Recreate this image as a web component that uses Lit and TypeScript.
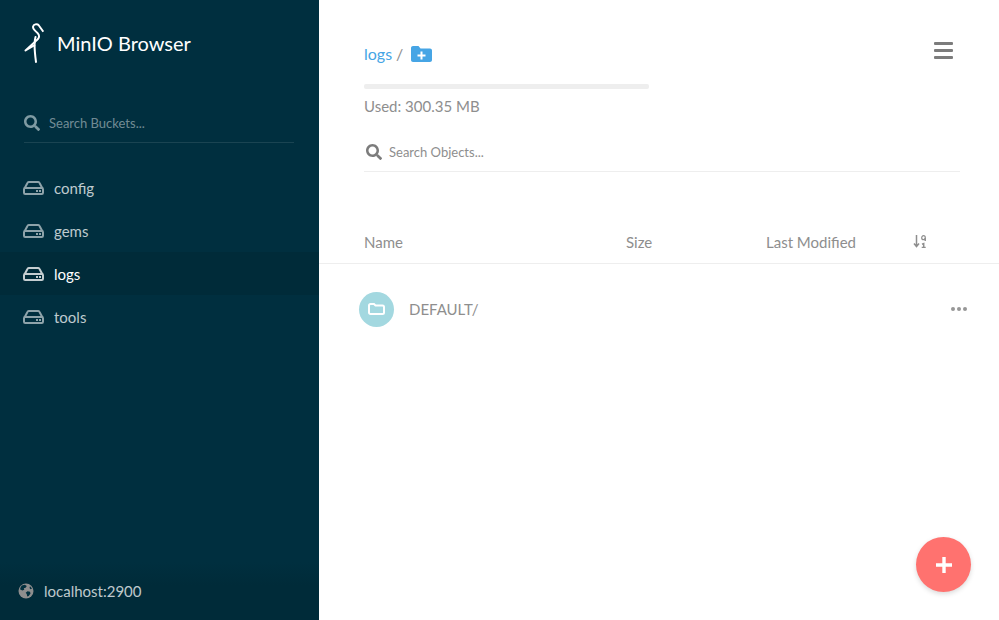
import { LitElement, css, html } from 'lit'
import { customElement } from 'lit/decorators.js'

const searchIcon = html`<svg viewBox="0 0 512 512" width="16" height="16"><path fill="currentColor" d="M505 442.700L405.300 343c-4.500-4.500-10.600-7-17-7H372c27.600-35.300 44-79.700 44-128C416 93.100 322.900 0 208 0S0 93.100 0 208s93.100 208 208 208c48.300 0 92.700-16.400 128-44v16.300c0 6.400 2.500 12.500 7 17l99.700 99.700c9.400 9.400 24.600 9.400 33.900 0l28.300-28.300c9.400-9.400 9.400-24.600.1-34zM208 336c-70.700 0-128-57.200-128-128 0-70.700 57.200-128 128-128 70.700 0 128 57.200 128 128 0 70.700-57.200 128-128 128z"/></svg>`

const driveIcon = html`<svg class="drive" viewBox="0 0 21 14" width="21" height="14">
  <path fill="none" stroke="currentColor" stroke-width="2" d="M1.500 7.500 4.300 2.200C4.600 1.500 5 1 5.700 1h9.600c.7 0 1.100.5 1.400 1.200L19.500 7.500"/>
  <rect x="1" y="7" width="19" height="6" rx="1.200" fill="none" stroke="currentColor" stroke-width="2"/>
  <rect x="13" y="9" width="2" height="2" fill="currentColor"/><rect x="16" y="9" width="2" height="2" fill="currentColor"/>
</svg>`

const buckets = ['config', 'gems', 'logs', 'tools']

@customElement('app-root')
export default class AppRoot extends LitElement {
  render() {
    return html`
    <aside class="sidebar">
      <div class="brand">
        <svg class="logo" viewBox="0 0 20 40" width="20" height="40">
          <path fill="none" stroke="#fff" stroke-width="1.900" stroke-linejoin="round" d="M19.300 8.700 14.500 2C13 .5 9.500 1.500 9 3.700 8.700 6 11 7.500 13.500 10 15.500 12 15.500 14 14 16L1.500 27.500 11 22"/>
          <path fill="none" stroke="#fff" stroke-width="2" stroke-linecap="round" d="M11.500 14C9.500 20 10.500 28 12 39"/>
        </svg>
        <span class="brand-name">MinIO Browser</span>
      </div>
      <div class="bucket-search">
        <span class="search-icon">${searchIcon}</span>
        <span>Search Buckets...</span>
      </div>
      <ul class="buckets">
        ${buckets.map(name => html`
          <li class=${name === 'logs' ? 'active' : ''}>${driveIcon}<span>${name}</span></li>
        `)}
      </ul>
      <div class="host">
        <svg viewBox="0 0 16 16" width="16" height="16">
          <circle cx="8" cy="8" r="7.500" fill="#8e8e8e"/>
          <path fill="#002f3e" d="M3.800 2.600 6.800 1.800 8.800 2.900 7.600 4.700 5.800 5.200 6.300 6.800 4.300 7.600 2 6.300C2.300 4.900 3 3.600 3.800 2.600ZM9.500 8.200 12 8.800 12.500 10.500 10.700 13 9.300 13.600 8.700 11 7.700 9.700ZM12 3.300 14 5.500 12.600 6.200 11.500 5Z"/>
        </svg>
        <span>localhost:2900</span>
      </div>
    </aside>
    <main class="content">
      <div class="top">
        <div class="path-row">
          <span class="crumb">logs</span><span class="slash">/</span>
          <svg class="new-folder" viewBox="0 0 21 16" width="21" height="16">
            <path fill="#46a5e5" d="M0 2C0 .9.900 0 2 0h5.500l2 2.500H19c1.100 0 2 .9 2 2V14c0 1.100-.9 2-2 2H2c-1.100 0-2-.9-2-2Z"/>
            <path stroke="#fff" stroke-width="2" d="M6.500 9.500h8M10.500 5.500v8"/>
          </svg>
          <span class="menu"><i></i><i></i><i></i></span>
        </div>
        <div class="usage"></div>
        <div class="used">Used: 300.35 MB</div>
        <div class="object-search">
          <span class="search-icon">${searchIcon}</span>
          <span>Search Objects...</span>
        </div>
      </div>
      <div class="list-head">
        <span class="col-name">Name</span>
        <span class="col-size">Size</span>
        <span class="col-modified">Last Modified</span>
        <svg viewBox="0 0 14 13" width="14" height="13">
          <path fill="none" stroke="#8e8e8e" stroke-width="1.500" d="M3.500 0v11M1 8.500l2.500 3 2.500-3"/>
          <ellipse cx="10.500" cy="2.700" rx="1.800" ry="2" fill="none" stroke="#8e8e8e" stroke-width="1.200"/>
          <path fill="none" stroke="#8e8e8e" stroke-width="1.500" d="M12.200 3v3M9 9.200 10.700 8.500V12.500M8.700 12.500h4"/>
        </svg>
      </div>
      <div class="row">
        <span class="folder">
          <svg viewBox="0 0 17 12" width="17" height="12">
            <path fill="none" stroke="#fff" stroke-width="2" d="M1 2.500C1 1.600 1.600 1 2.500 1H6L7.500 2.500h7c.9 0 1.500.6 1.500 1.500v5.500c0 .9-.6 1.500-1.500 1.500h-12C1.600 11 1 10.400 1 9.500Z"/>
          </svg>
        </span>
        <span class="file-name">DEFAULT/</span>
        <span class="more"><i></i><i></i><i></i></span>
      </div>
      <span class="fab">
        <svg viewBox="0 0 16 16" width="16" height="16"><path stroke="#fff" stroke-width="3.400" d="M0 8h16M8 0v16"/></svg>
      </span>
    </main>
    `
  }

  static styles = css`
:host {
  display: flex;
  height: 620px;
  overflow: hidden;
  font-family: Lato, sans-serif;
  font-size: 15px;
  color: #8e8e8e;
  background: #fff;
}
.sidebar {
  width: 319px;
  flex: none;
  display: flex;
  flex-direction: column;
  background: #002f3f;
  color: rgba(255, 255, 255, .75);
}
.brand {
  display: flex;
  align-items: center;
  height: 44px;
  margin: 21px 0 0 24px;
}
.brand-name {
  margin-left: 13px;
  font-size: 20px;
  color: #fff;
}
.bucket-search {
  display: flex;
  align-items: center;
  height: 38px;
  margin: 39px 25px 0 24px;
  border-bottom: 1px solid rgba(255, 255, 255, .1);
  font-size: 13px;
  color: rgba(255, 255, 255, .45);
}
.bucket-search .search-icon {
  width: 25px;
  height: 16px;
  color: #7f9ba3;
}
.buckets {
  list-style: none;
  margin: 23px 0 0;
  padding: 0;
}
.buckets li {
  display: flex;
  align-items: center;
  height: 43px;
  padding-left: 23px;
}
.buckets li.active {
  background: #002b39;
  color: #fff;
}
.drive {
  margin-right: 10px;
  color: #8ea3aa;
}
.active .drive {
  color: #c5ced1;
}
.host {
  margin-top: auto;
  height: 58px;
  display: flex;
  align-items: center;
  gap: 10px;
  padding-left: 18px;
  background: linear-gradient(#002f3f, #002b39 40%);
  font-size: 15px;
}
.content {
  position: relative;
  flex: 1;
  min-width: 0;
}
.top {
  padding: 37px 39px 0 45px;
}
.path-row {
  display: flex;
  align-items: center;
  height: 32px;
  font-size: 16px;
}
.crumb {
  color: #46a5e5;
}
.slash {
  margin: 0 8px 0 4px;
}
.new-folder {
  margin-top: 2px;
}
.menu {
  margin-left: auto;
  margin-right: 7px;
  margin-top: -5px;
  width: 19px;
  display: flex;
  flex-direction: column;
  gap: 3.500px;
}
.menu i {
  height: 3.500px;
  border-radius: 1px;
  background: #7c7c7c;
}
.usage {
  width: 285px;
  height: 5px;
  margin-top: 15px;
  border-radius: 2px;
  background: #eee;
}
.used {
  margin-top: 8px;
  line-height: 19px;
}
.object-search {
  display: flex;
  align-items: center;
  height: 38px;
  margin-top: 17px;
  border-bottom: 1px solid #eee;
  font-size: 13px;
}
.object-search .search-icon {
  width: 25px;
  height: 16px;
  margin-left: 2px;
  margin-right: -2px;
  color: #7c7c7c;
}
.list-head {
  display: flex;
  align-items: center;
  height: 43px;
  margin-top: 48px;
  padding-left: 45px;
  border-bottom: 1px solid #eee;
}
.col-name { width: 262px; }
.col-size { width: 140px; }
.col-modified { width: 147px; }
.row {
  display: flex;
  align-items: center;
  height: 90px;
  padding: 0 32px 0 40px;
}
.folder {
  display: flex;
  align-items: center;
  justify-content: center;
  width: 35px;
  height: 35px;
  border-radius: 50%;
  background: #a3d8e0;
}
.file-name {
  margin-left: 15px;
}
.more {
  margin-left: auto;
  display: flex;
  gap: 2px;
}
.more i {
  width: 4px;
  height: 4px;
  border-radius: 50%;
  background: #979797;
}
.fab {
  position: absolute;
  right: 28px;
  bottom: 28px;
  display: flex;
  align-items: center;
  justify-content: center;
  width: 55px;
  height: 55px;
  border-radius: 50%;
  background: #ff726f;
  box-shadow: 0 2px 5px rgba(0, 0, 0, .15);
}
`
}

declare global {
  interface HTMLElementTagNameMap {
    'app-root': AppRoot
  }
}
